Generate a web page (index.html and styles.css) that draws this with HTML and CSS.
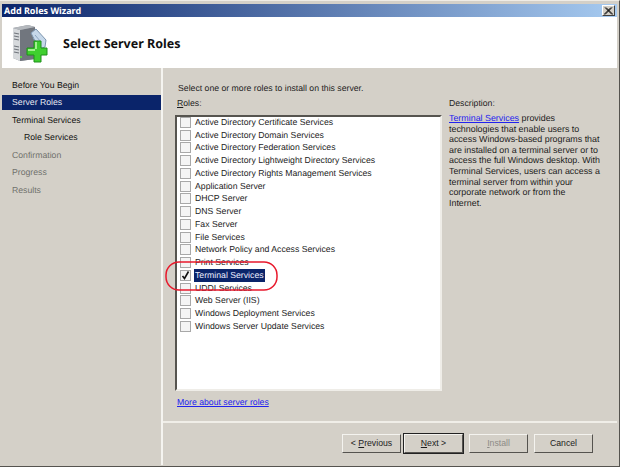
FILE: index.html
```html
<!DOCTYPE html>
<html lang="en">
<head>
<meta charset="utf-8">
<title>Add Roles Wizard</title>
<link rel="stylesheet" href="styles.css">
</head>
<body>
<div class="window">
  <div class="titlebar">
    <span class="title">Add Roles Wizard</span>
    <span class="close"><svg width="9" height="8" viewBox="0 0 9 8"><path d="M1 0.5 L8 7.5 M2 0.5 L9 7.5 M8 0.5 L1 7.5 M7 0.5 L0 7.5" stroke="#111" stroke-width="1" fill="none"/></svg></span>
  </div>
  <header class="banner">
    <svg class="logo" width="36" height="39" viewBox="0 0 36 39">
      <path d="M1 4 L16 1 L23 3 L23 35 L8 37 L1 34 Z" fill="#8d9299"/>
      <path d="M1 4 L8 6 L8 37 L1 34 Z" fill="#d6d9dc"/>
      <path d="M8 6 L23 3 L23 35 L8 37 Z" fill="#71767e"/>
      <path d="M1 4 L16 1 L23 3 L8 6 Z" fill="#b4b8bd"/>
      <path d="M2 9 L7 10 M2 12 L7 13 M2 15 L7 16 M2 22 L7 23 M2 25 L7 26 M2 28 L7 29" stroke="#70757c" stroke-width="1.2"/>
      <rect x="8" y="32" width="2" height="2" fill="#5fd04a"/>
      <path d="M19 9 L24 5 L34 16 L33 23 L27 25 Z" fill="#c6d8ea" stroke="#7d95ae" stroke-width="1"/>
      <path d="M23 11 L29 18 M21 14 L27 21" stroke="#8ba5c0" stroke-width="1"/>
      <path d="M15 24 H22 V17 H29 V24 H35 V31 H29 V38 H22 V31 H15 Z" fill="#3fcf2f" stroke="#1f8f1a" stroke-width="1"/>
      <path d="M23 18 H25 V25 H16 V27 H23 Z" fill="#a3f08f"/>
    </svg>
    <h1 class="heading">Select Server Roles</h1>
  </header>
  <div class="main">
    <nav class="nav">
      <div class="step">Before You Begin</div>
      <div class="step current">Server Roles</div>
      <div class="step">Terminal Services</div>
      <div class="step sub">Role Services</div>
      <div class="step off">Confirmation</div>
      <div class="step off">Progress</div>
      <div class="step off">Results</div>
    </nav>
    <div class="content">
      <div class="pane">
        <p class="intro">Select one or more roles to install on this server.</p>
        <div class="columns">
          <div class="roles">
            <label class="caption"><u>R</u>oles:</label>
            <ul class="list">
              <li class="row"><span class="box"></span><span>Active Directory Certificate Services</span></li>
              <li class="row"><span class="box"></span><span>Active Directory Domain Services</span></li>
              <li class="row"><span class="box"></span><span>Active Directory Federation Services</span></li>
              <li class="row"><span class="box"></span><span>Active Directory Lightweight Directory Services</span></li>
              <li class="row"><span class="box"></span><span>Active Directory Rights Management Services</span></li>
              <li class="row"><span class="box"></span><span>Application Server</span></li>
              <li class="row"><span class="box"></span><span>DHCP Server</span></li>
              <li class="row"><span class="box"></span><span>DNS Server</span></li>
              <li class="row"><span class="box"></span><span>Fax Server</span></li>
              <li class="row"><span class="box"></span><span>File Services</span></li>
              <li class="row"><span class="box"></span><span>Network Policy and Access Services</span></li>
              <li class="row"><span class="box"></span><span>Print Services</span></li>
              <li class="row"><span class="box"><svg width="9" height="9" viewBox="0 0 9 9"><path d="M1.5 5 L3.5 7.5 L7.5 0.5" stroke="#111" stroke-width="1.6" fill="none"/></svg></span><span class="picked">Terminal Services</span></li>
              <li class="row"><span class="box"></span><span>UDDI Services</span></li>
              <li class="row"><span class="box"></span><span>Web Server (IIS)</span></li>
              <li class="row"><span class="box"></span><span>Windows Deployment Services</span></li>
              <li class="row"><span class="box"></span><span>Windows Server Update Services</span></li>
            </ul>
            <a class="more" href="#">More about server roles</a>
          </div>
          <aside class="desc">
            <div class="caption">Description:</div>
            <p class="desc-text"><a href="#">Terminal Services</a> provides technologies that enable users to access Windows-based programs that are installed on a terminal server or to access the full Windows desktop. With Terminal Services, users can access a terminal server from within your corporate network or from the<br>Internet.</p>
          </aside>
        </div>
      </div>
      <footer class="actions">
        <button class="btn">&lt; <u>P</u>revious</button>
        <button class="btn default"><u>N</u>ext &gt;</button>
        <button class="btn gap" disabled><u>I</u>nstall</button>
        <button class="btn gap">Cancel</button>
      </footer>
    </div>
  </div>
  <svg class="callout" width="114" height="31" viewBox="0 0 114 31"><rect x="1" y="1" width="111" height="28" rx="13" fill="none" stroke="#e8192c" stroke-width="1.5"/></svg>
</div>
</body>
</html>
```
FILE: styles.css
```css
* { box-sizing: border-box; }
html, body { margin: 0; padding: 0; }
body { width: 620px; height: 467px; background: #d4d0c8; overflow: hidden; }
.window {
  position: relative;
  width: 620px; height: 467px;
  padding: 3px 2px 1px 2px;
  background: #d4d0c8;
  border-top: 1px solid #efece6;
  border-bottom: 1px solid #55534f;
  border-right: 1px solid #55534f;
  display: flex; flex-direction: column;
  font: 8.7px/13px "Liberation Sans", Arial, sans-serif;
  text-rendering: geometricPrecision;
  color: #1c1c1c;
}
.titlebar {
  height: 13px; flex: none;
  display: flex; align-items: center; justify-content: space-between;
  padding: 0 2px;
  background: linear-gradient(90deg, #0a246a, #a6caf0);
}
.title { color: #fff; font: 700 9px/13px "Noto Sans", sans-serif; }
.close {
  width: 13px; height: 11px;
  display: flex; align-items: center; justify-content: center;
  background: #d4d0c8;
  border: 1px solid; border-color: #fff #404040 #404040 #fff;
}
.banner {
  height: 51px; flex: none;
  display: flex; align-items: center;
  padding: 2px 0 0 10px;
  background: #fff;
}
.logo { flex: none; margin-right: 15px; }
.heading { margin: 0; font: 700 12.5px/16px "Noto Sans", sans-serif; color: #111; }
.main { flex: 1; display: flex; min-height: 0; }
.nav { width: 159px; flex: none; padding-top: 8.5px; }
.step { height: 17.5px; line-height: 17.5px; padding-left: 10px; color: #111; }
.step.current { background: #0a246a; color: #e8e8f0; height: 15px; line-height: 15px; margin: 1px 0 1.5px; }
.step.sub { padding-left: 22px; }
.step.off { color: #70706c; }
.content {
  flex: 1; display: flex; flex-direction: column;
  border-left: 2px solid #f5f4f0;
}
.pane { flex: 1; padding: 13px 0 0 12px; border-bottom: 2px solid #f0eee8; display: flex; flex-direction: column; }
.intro { margin: 0 0 1px 3px; height: 15px; line-height: 15px; }
.columns { flex: 1; display: flex; }
.roles { width: 267px; flex: none; display: flex; flex-direction: column; }
.caption { display: block; height: 13px; line-height: 13px; margin: 0 0 5px 2px; }
.list {
  list-style: none; margin: 0; padding: 0 0 0 3px;
  height: 276px;
  background: #fff;
  border: 2px solid; border-color: #56544f #efede8 #efede8 #56544f;
}
.row { height: 12.75px; display: flex; align-items: center; }
.row:first-child { margin-top: -1px; }
.box {
  width: 11px; height: 11px; flex: none; margin-right: 4px;
  border: 1px solid #a8a8a8; background: #f4f4f4;
  display: flex; align-items: center; justify-content: center;
}
.picked { background: #0a246a; color: #eef; padding: 0 1px; margin-left: -1px; }
.more { margin: 5px 0 0 2px; color: #2222ee; height: 13px; line-height: 13px; }
.desc { margin-left: 7px; width: 153px; }
.desc .caption { margin: 0 0 3px 0; }
.desc-text { margin: 0; line-height: 10.6px; font-size: 8.9px; }
.desc-text a { color: #2222ee; }
.actions {
  height: 42px; flex: none;
  display: flex; align-items: flex-start;
  padding: 11px 0 0 179px;
  gap: 3px;
}
.btn {
  width: 59px; height: 19px; padding: 0;
  font: inherit; color: #1c1c1c;
  background: #d4d0c8;
  border: 1px solid; border-color: #f4f3ef #55534f #55534f #f4f3ef;
}
.btn.default { outline: 1px solid #222; }
.btn.gap { margin-left: 3px; }
.btn:disabled { color: #8d8b86; }
.callout { position: absolute; left: 165px; top: 260px; }
```
